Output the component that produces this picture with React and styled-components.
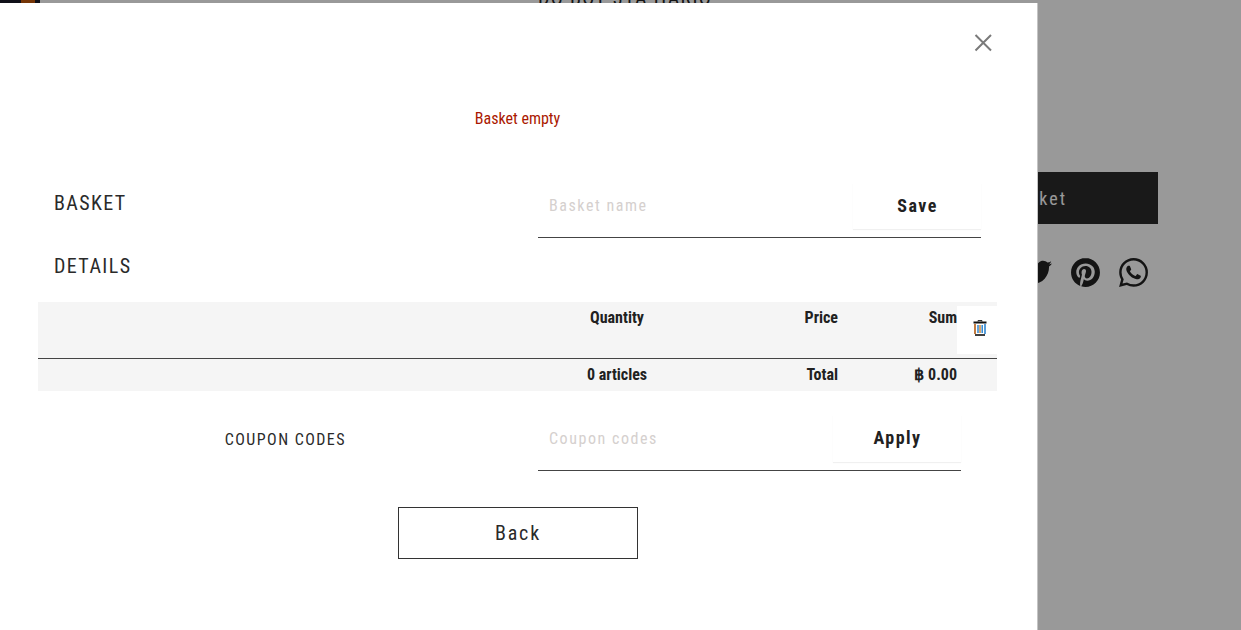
import React from 'react';
import styled, { createGlobalStyle } from 'styled-components';
import { FaTwitter } from 'react-icons/fa';
import { SiPinterest, SiWhatsapp } from 'react-icons/si';

const GlobalStyle = createGlobalStyle`
  html, body {
    margin: 0;
    padding: 0;
    height: 630px;
    overflow: hidden;
    background: #fff;
    font-family: Roboto, "Liberation Sans", sans-serif;
    font-stretch: 75%;
  }
`;

const Page = styled.div`
  position: relative;
  width: 1241px;
  height: 630px;
  overflow: hidden;
  background: #fff;
`;

const Shop = styled.div`
  display: grid;
  grid-template-columns: 538px 1fr;
  height: 630px;
`;

const Logo = styled.div`
  display: flex;
  width: 40px;
  height: 3px;
  background: #1c1c28;
  justify-content: flex-end;
`;

const LogoMark = styled.span`
  width: 14px;
  margin-right: 5px;
  background: #c4590c;
`;

const Product = styled.div`
  display: flex;
  flex-direction: column;
  align-items: flex-start;
`;

const ProductTitle = styled.h1`
  margin: -14px 0 0;
  font-size: 20px;
  line-height: 24px;
  font-weight: 400;
  letter-spacing: 1.3px;
  white-space: nowrap;
  color: #222;
`;

const AddButton = styled.button`
  width: 620px;
  height: 52px;
  margin-top: 162px;
  border: 0;
  background: #2b2b2b;
  color: #fff;
  font: inherit;
  font-size: 18px;
  letter-spacing: 2px;
  text-align: right;
  padding: 0 91px 0 0;
`;

const Socials = styled.div`
  display: flex;
  gap: 19px;
  width: 620px;
  justify-content: flex-end;
  padding-right: 10px;
  box-sizing: border-box;
  margin-top: 34px;
  font-size: 29px;
  color: #222;
  line-height: 0;
`;

const Overlay = styled.div`
  position: absolute;
  inset: 0;
  background: rgba(0, 0, 0, 0.4);
`;

const Modal = styled.section`
  position: absolute;
  left: 0;
  top: 3px;
  width: 1038px;
  height: 627px;
  box-sizing: border-box;
  background: #fff;
  border-right: 1px solid #c4c4c4;
  color: #212121;
`;

const CloseButton = styled.button`
  position: absolute;
  top: 31px;
  left: 973px;
  width: 20px;
  height: 18px;
  padding: 0;
  border: 0;
  background: none;
  line-height: 0;
`;

const Alert = styled.p`
  margin: 0;
  padding: 106px 2px 0 0;
  height: 68px;
  text-align: center;
  font-size: 16px;
  line-height: 20px;
  color: #aa1800;
`;

const NameRow = styled.div`
  display: grid;
  grid-template-columns: 538px 443px;
`;

const Heading = styled.h2`
  margin: 0;
  padding: 14px 0 0 54px;
  font-size: 20px;
  line-height: 24px;
  font-weight: 400;
  letter-spacing: 1.4px;
  color: #2a2a2a;
`;

const Field = styled.div`
  display: flex;
  align-items: flex-start;
  height: 61px;
  box-sizing: border-box;
  border-bottom: 1px solid #444;
`;

const FieldInput = styled.input`
  flex: 1;
  min-width: 0;
  height: 50px;
  margin-top: 3px;
  padding: 0 11px;
  border: 0;
  outline: 0;
  background: transparent;
  font: inherit;
  font-size: 16px;
  letter-spacing: 1.55px;
  &::placeholder {
    color: #d5d0ce;
    opacity: 1;
  }
`;

const FieldButton = styled.button`
  width: 128px;
  height: ${p => (p.$tall ? 47 : 46)}px;
  margin-top: ${p => (p.$tall ? 5 : 6)}px;
  padding: 0 0 2px 1px;
  border: 0;
  background: #fff;
  box-shadow: 0 1px 1px rgba(0, 0, 0, 0.06);
  font: inherit;
  font-size: 18px;
  font-weight: 700;
  letter-spacing: 1.5px;
  color: #212121;
`;

const DetailsHeading = styled(Heading)`
  padding-top: 16px;
  height: 48px;
`;

const Table = styled.div`
  width: 959px;
  margin: 0 0 0 38px;
  background: #f5f5f5;
`;

const TableRow = styled.div`
  display: grid;
  grid-template-columns: 519px 120px 161px 119px 40px;
  height: ${p => p.$height}px;
  font-size: 16px;
  line-height: 20px;
  font-weight: 700;
  color: #212121;
  & + & {
    border-top: 1px solid #444;
  }
`;

const Cell = styled.div`
  padding-top: ${p => p.$top}px;
  text-align: ${p => p.$align || 'right'};
`;

const TrashCell = styled.div`
  box-sizing: border-box;
  height: 48px;
  margin-top: 4px;
  padding: 14px 0 0 16px;
  background: #fff;
  line-height: 0;
`;

const CouponRow = styled.div`
  display: grid;
  grid-template-columns: 538px 423px;
  margin-top: 19px;
`;

const CouponLabel = styled.div`
  padding: 20px 192px 0 0;
  text-align: right;
  font-size: 16px;
  line-height: 20px;
  letter-spacing: 1.45px;
  color: #2a2a2a;
`;

const BackRow = styled.div`
  display: flex;
  padding: 36px 0 0 398px;
`;

const BackButton = styled.button`
  width: 240px;
  height: 52px;
  border: 1px solid #333;
  background: #fff;
  font: inherit;
  font-size: 20px;
  letter-spacing: 1.8px;
  color: #2a2a2a;
`;

const TrashIcon = () => (
  <svg width="14" height="16" viewBox="0 0 14 16" fill="none">
    <path d="M5 1.5 V0.6 H9 V1.5" stroke="#222" strokeWidth="1" />
    <path d="M0.5 2.5 H13.5" stroke="#111" strokeWidth="2" />
    <path d="M2 4 V14" stroke="#b35c12" strokeWidth="1.6" />
    <path d="M12 4 V14" stroke="#2f86d0" strokeWidth="1.6" />
    <path d="M5 5 V13" stroke="#2f86d0" strokeWidth="1.5" />
    <path d="M7 5 V13" stroke="#d08a3c" strokeWidth="1.5" />
    <path d="M9.2 5 V13" stroke="#2f86d0" strokeWidth="1.5" />
    <path d="M2 15 H12" stroke="#111" strokeWidth="1.6" />
  </svg>
);

const App = () => (
  <Page>
    <GlobalStyle />
    <Shop>
      <Logo>
        <LogoMark />
      </Logo>
      <Product>
        <ProductTitle>DO BOY 31A HARIO</ProductTitle>
        <AddButton>Add to basket</AddButton>
        <Socials>
          <FaTwitter />
          <SiPinterest />
          <SiWhatsapp />
        </Socials>
      </Product>
    </Shop>
    <Overlay />
    <Modal>
      <CloseButton aria-label="Close">
        <svg width="20" height="18" viewBox="0 0 20 18" fill="none" stroke="#7a7a7a" strokeWidth="2">
          <path d="M2.5 1 L18 16.5 M18 1 L2.5 16.5" />
        </svg>
      </CloseButton>
      <Alert>Basket empty</Alert>
      <NameRow>
        <Heading>BASKET</Heading>
        <Field>
          <FieldInput placeholder="Basket name" />
          <FieldButton>Save</FieldButton>
        </Field>
      </NameRow>
      <DetailsHeading>DETAILS</DetailsHeading>
      <Table>
        <TableRow $height={56}>
          <Cell />
          <Cell $top={6} $align="center">Quantity</Cell>
          <Cell $top={6}>Price</Cell>
          <Cell $top={6}>Sum</Cell>
          <TrashCell>
            <TrashIcon />
          </TrashCell>
        </TableRow>
        <TableRow $height={32}>
          <Cell />
          <Cell $top={6} $align="center">0 articles</Cell>
          <Cell $top={6}>Total</Cell>
          <Cell $top={6}>฿ 0.00</Cell>
          <Cell />
        </TableRow>
      </Table>
      <CouponRow>
        <CouponLabel>COUPON CODES</CouponLabel>
        <Field>
          <FieldInput placeholder="Coupon codes" />
          <FieldButton $tall>Apply</FieldButton>
        </Field>
      </CouponRow>
      <BackRow>
        <BackButton>Back</BackButton>
      </BackRow>
    </Modal>
  </Page>
);

export default App;
